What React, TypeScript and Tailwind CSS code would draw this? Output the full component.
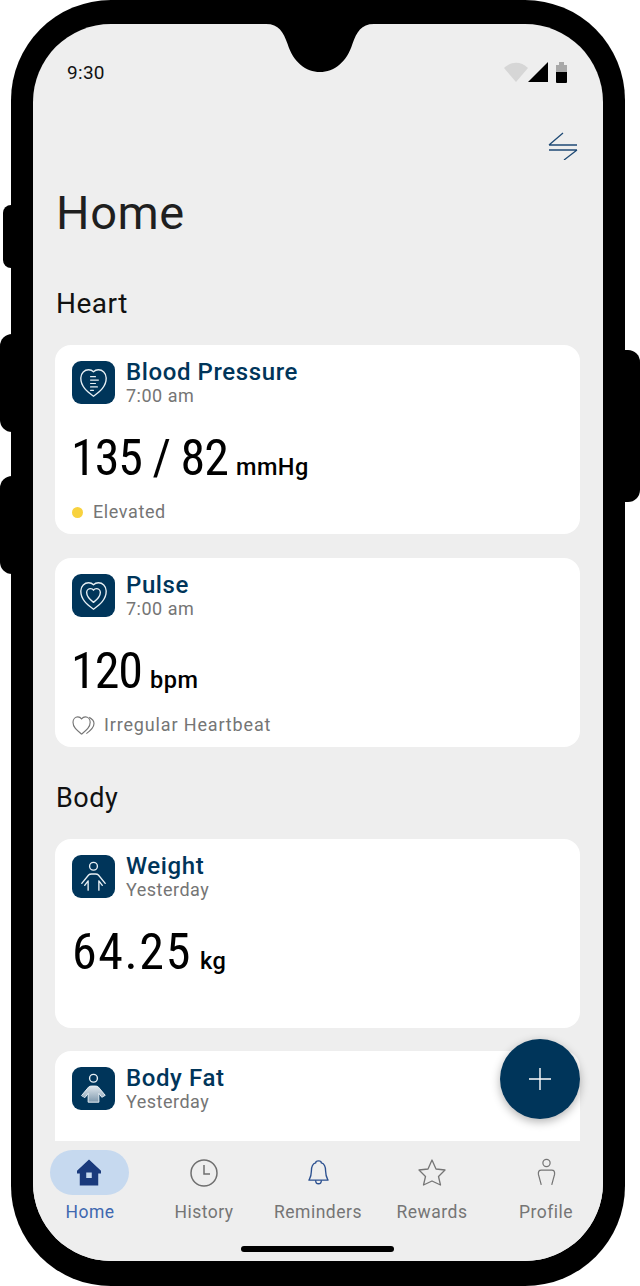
import { ReactNode } from "react";

const font = "font-['Roboto',sans-serif]";

function IconTile({ children }: { children: ReactNode }) {
  return (
    <div className="w-[43px] h-[43px] rounded-[9px] bg-[#00355a] flex items-center justify-center shrink-0">
      <svg viewBox="0 0 44 44" className="w-[43px] h-[43px]" fill="none" stroke="#e8f0f5" strokeWidth="1.4" strokeLinecap="round" strokeLinejoin="round">
        {children}
      </svg>
    </div>
  );
}

const heart = "M22 36 C15 31 9 26 9 17.5 C9 12 13 9 17 9 C19 9 21 10 22 11 C23 10 25 9 27 9 C31 9 35 12 35 17.5 C35 26 29 31 22 36 Z";

function Card({ icon, title, time, value, unit, valueClass, footer, clipped }: {
  icon: ReactNode; title: string; time: string; value: string; unit: string; valueClass?: string; footer?: ReactNode; clipped?: boolean;
}) {
  return (
    <div className={`bg-white ml-[22px] mr-[23px] pl-[17px] pt-[16px] shrink-0 ${clipped ? "h-[91px] rounded-t-[16px]" : "h-[189px] rounded-[16px]"}`}>
      <div className="flex gap-[11px]">
        <IconTile>{icon}</IconTile>
        <div className="-mt-[2px]">
          <div className="text-[24px] leading-[26px] font-medium tracking-[0.6px] text-[#00355a]">{title}</div>
          <div className="text-[18px] leading-[21px] tracking-[0.5px] text-[#757575]">{time}</div>
        </div>
      </div>
      {value && (
        <div className="mt-[23px] flex items-baseline h-[58px] text-black">
          <span className={`text-[50px] leading-[58px] [font-stretch:75%] ${valueClass ?? "-ml-[1px] -tracking-[1px]"}`}>{value}</span>
          <span className="ml-[8px] text-[23.5px] font-medium tracking-[0.5px]">{unit}</span>
        </div>
      )}
      {footer && <div className="mt-[13px] flex items-center text-[18px] leading-[24px] tracking-[0.6px] text-[#757575]">{footer}</div>}
    </div>
  );
}

function NavItem({ label, active, children }: { label: string; active?: boolean; children: ReactNode }) {
  return (
    <div className="flex-1 flex flex-col items-center">
      <div className={`w-[79px] h-[45px] rounded-full flex items-center justify-center ${active ? "bg-[#c6d9ef] -translate-x-px" : ""}`}>
        {children}
      </div>
      <div className={`mt-[5px] text-[17.5px] leading-[24px] tracking-[0.5px] whitespace-nowrap ${active ? "text-[#3f68b0]" : "text-[#757575]"}`}>{label}</div>
    </div>
  );
}

export default function App() {
  return (
    <div className={`relative w-[640px] h-[1286px] bg-white overflow-hidden ${font}`}>
      {/* side buttons */}
      <div className="absolute left-[3px] top-[205px] w-[20px] h-[63px] bg-black rounded-l-[8px]" />
      <div className="absolute left-0 top-[334px] w-[20px] h-[98px] bg-black rounded-l-[12px]" />
      <div className="absolute left-0 top-[476px] w-[20px] h-[98px] bg-black rounded-l-[12px]" />
      <div className="absolute right-0 top-[350px] w-[20px] h-[152px] bg-black rounded-r-[12px]" />

      <div className="relative ml-[11px] w-[614px] h-[1286px] bg-black rounded-[100px] pl-[22px] pt-[24px]">
        <div className="relative w-[570px] h-[1237px] bg-[#eeeeee] rounded-[78px] overflow-hidden flex flex-col">
          {/* notch */}
          <svg className="absolute left-[233px] top-0 w-[108px] h-[49px]" viewBox="0 0 100 49" preserveAspectRatio="none">
            <path d="M0 0 H100 C88 0 84 8 80 20 C75 38 63 48 50 48 C37 48 25 38 20 20 C16 8 12 0 0 0 Z" fill="#000" />
          </svg>

          {/* status bar */}
          <div className="flex items-center justify-between h-[96px] pl-[34px] pr-[33px] pt-[2px] shrink-0">
            <span className="text-[19px] font-normal text-[#111] tracking-[0.3px]">9:30</span>
            <svg viewBox="0 0 66 22" className="w-[66px] h-[22px]">
              <path d="M0 6 C7 -1 17 -1 24 6 L12 20 Z" fill="#d6d6d6" />
              <path d="M24 20 L44 0 V20 Z" fill="#000" />
              <path d="M55 3 V0 H60 V3 H63 V10 H52 V3 Z" fill="#a8a8a8" />
              <path d="M52 10 H63 V20 Q63 21 62 21 H53 Q52 21 52 20 Z" fill="#000" />
            </svg>
          </div>

          {/* swap */}
          <div className="flex justify-end pr-[25px] mt-[12px] h-[28px] shrink-0">
            <svg viewBox="0 0 30 28" className="w-[30px] h-[28px]" fill="none" stroke="#1f4a75" strokeWidth="1.3">
              <path d="M1 13 H29 M1 13 L15 1 M1 18 H29 M29 18 L16 28" />
            </svg>
          </div>

          <h1 className="ml-[23px] mt-[23px] text-[47px] leading-[60px] font-normal tracking-[0.6px] text-[#1f1f1f] shrink-0">Home</h1>

          <h2 className="ml-[23px] mt-[43px] text-[28px] leading-[36px] tracking-[0.5px] text-[#111] shrink-0">Heart</h2>

          <div className="mt-[23px] flex flex-col gap-[24px] shrink-0">
            <Card
              title="Blood Pressure"
              time="7:00 am"
              value="135 / 82"
              unit="mmHg"
              icon={<>
                <path d={heart} />
                <path d="M19 16 H24 M19 19.5 H27 M19 23 H24 M19 26.5 H26 M19 30 H22" strokeWidth="1.2" />
              </>}
              footer={<><span className="w-[11px] h-[11px] rounded-full bg-[#f8d23e] mr-[10px]" />Elevated</>}
            />
            <Card
              title="Pulse"
              time="7:00 am"
              value="120"
              unit="bpm"
              icon={<>
                <path d={heart} />
                <path d="M22 29 C18 26 15 23 15 19 C15 16.5 17 15 19 15 C20.2 15 21.4 15.7 22 16.6 C22.6 15.7 23.8 15 25 15 C27 15 29 16.5 29 19 C29 23 26 26 22 29 Z" />
              </>}
              footer={<>
                <svg viewBox="0 0 24 22" className="w-[23px] h-[21px] mr-[9px]" fill="none" stroke="#757575" strokeWidth="1.2">
                  <path d="M10 20 C5 16 1 13 1 7.5 C1 4 3.5 2 6 2 C7.8 2 9.2 3 10 4 C10.8 3 12.2 2 14 2 C16.5 2 19 4 19 7.5 C19 13 15 16 10 20 Z" />
                  <path d="M18 2.5 C21 4 23 6 23 9 C23 13 20 16 15 19.5" />
                </svg>
                <span className="tracking-[0.85px]">Irregular Heartbeat</span>
              </>}
            />
          </div>

          <h2 className="ml-[23px] mt-[33px] text-[27px] leading-[36px] tracking-[0.5px] text-[#111] shrink-0">Body</h2>

          <div className="mt-[23px] flex flex-col gap-[23px] shrink-0">
            <Card
              title="Weight"
              time="Yesterday"
              value="64.25"
              unit="kg"
              valueClass="tracking-[1.6px]"
              icon={<>
                <circle cx="22" cy="11.5" r="4" />
                <path d="M10 29 L17 20.5 Q18 19.5 20 19.5 H24 Q26 19.5 27 20.5 L34 29 M13 31 L16.5 26.5 V36 M31 31 L27.5 26.5 V36" />
              </>}
            />
            <Card
              title="Body Fat"
              time="Yesterday"
              value=""
              unit=""
              clipped
              icon={<>
                <defs>
                  <linearGradient id="torso" x1="0" y1="0" x2="0" y2="1">
                    <stop offset="0" stopColor="#dfe7ed" />
                    <stop offset="1" stopColor="#7f99ad" />
                  </linearGradient>
                </defs>
                <circle cx="22" cy="11.5" r="4" />
                <path d="M10 29 L17 20.5 Q18 19.5 20 19.5 H24 Q26 19.5 27 20.5 L34 29 L30.5 31 L27.5 27 V36 H16.5 V27 L13.5 31 Z" fill="url(#torso)" stroke="#e8f0f5" strokeWidth="1" />
              </>}
            />
          </div>

          {/* bottom nav */}
          <div className="absolute left-0 right-0 bottom-0 h-[120px] bg-[#eeeeee] pt-[9px]">
            <div className="flex">
              <NavItem label="Home" active>
                <svg viewBox="0 0 26 28" className="w-[24px] h-[27px]">
                  <path d="M13 0 L26 12 V15 H23 V28 H3 V15 H0 V12 Z M10 14 V20 H16 V14 Z" fill="#1a3a7c" fillRule="evenodd" />
                </svg>
              </NavItem>
              <NavItem label="History">
                <svg viewBox="0 0 28 28" className="w-[28px] h-[28px]" fill="none" stroke="#6f6f6f" strokeWidth="1.5">
                  <circle cx="14" cy="14" r="13" />
                  <path d="M14 6 V15 H20" />
                </svg>
              </NavItem>
              <NavItem label="Reminders">
                <svg viewBox="0 0 22 28" className="w-[21px] h-[27px]" fill="none" stroke="#2a4f8f" strokeWidth="1.4" strokeLinejoin="round">
                  <path d="M8 4 C8 1 14 1 14 4 C18 5 18.5 9 18.5 13 C18.5 18 20 20 21 22 H1 C2 20 3.5 18 3.5 13 C3.5 9 4 5 8 4 Z" />
                  <path d="M8 22 C8 27 14 27 14 22" />
                </svg>
              </NavItem>
              <NavItem label="Rewards">
                <svg viewBox="0 0 28 27" className="w-[28px] h-[27px]" fill="none" stroke="#757575" strokeWidth="1.3" strokeLinejoin="round">
                  <path d="M14 1 L18 10 L27 11 L20.5 17.5 L22.5 26 L14 22 L5.5 26 L7.5 17.5 L1 11 L10 10 Z" />
                </svg>
              </NavItem>
              <NavItem label="Profile">
                <svg viewBox="0 0 20 30" className="w-[19px] h-[29px]" fill="none" stroke="#757575" strokeWidth="1.3" strokeLinejoin="round">
                  <circle cx="10" cy="5" r="3.8" />
                  <path d="M4.5 28 L1.5 17 Q1 12.5 4.5 12.5 H15.5 Q19 12.5 18.5 17 L15.5 28" />
                </svg>
              </NavItem>
            </div>
            <div className="absolute left-[208px] bottom-[9px] w-[153px] h-[6px] rounded-full bg-black" />
          </div>

          {/* FAB */}
          <div className="absolute left-[467px] top-[1015px] w-[80px] h-[80px] rounded-full bg-[#00355a] shadow-[0_3px_10px_rgba(0,0,0,0.3)] flex items-center justify-center">
            <svg viewBox="0 0 24 24" className="w-[24px] h-[24px]" stroke="#fff" strokeWidth="1.4"><path d="M12 1 V23 M1 12 H23" /></svg>
          </div>
        </div>
      </div>
    </div>
  );
}
